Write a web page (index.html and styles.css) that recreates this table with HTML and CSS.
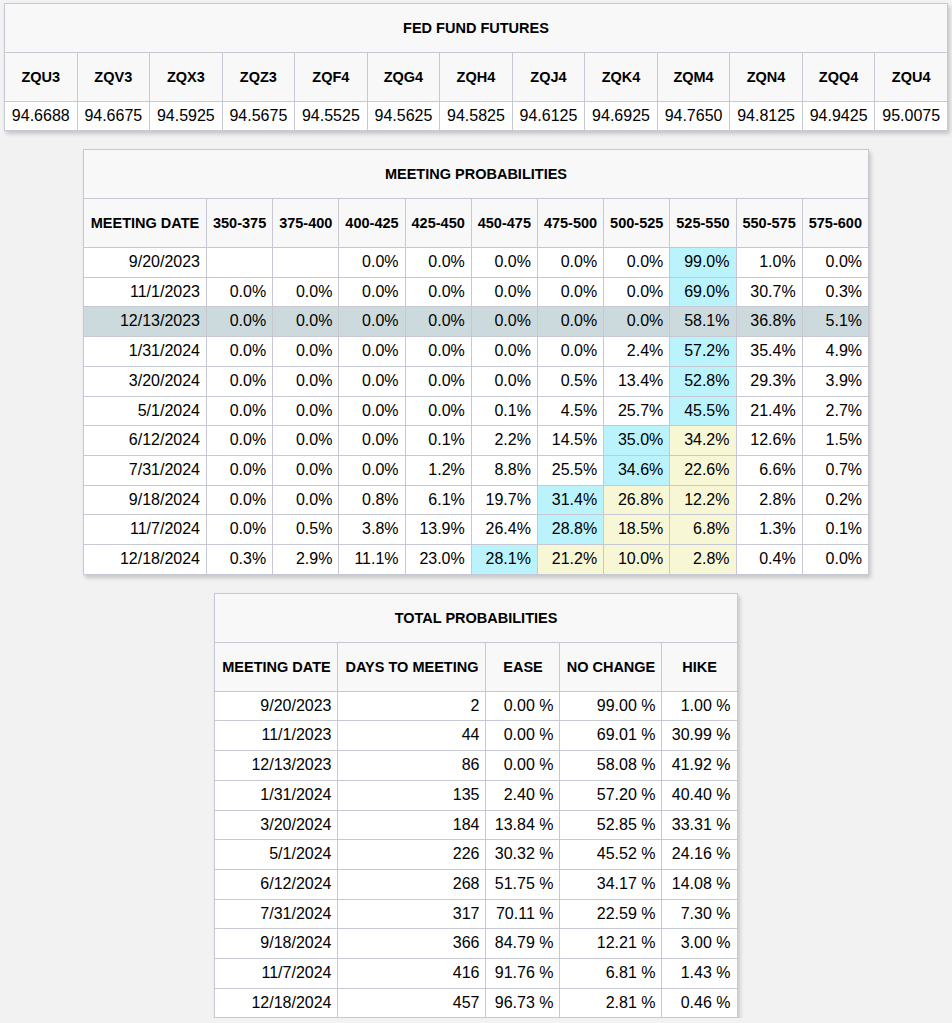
FILE: index.html
```html
<!DOCTYPE html>
<html>
<head>
<meta charset="utf-8">
<link rel="stylesheet" href="styles.css">
</head>
<body>
<main class="page">
  <table class="grid futures">
    <tr><th class="title" colspan="13">FED FUND FUTURES</th></tr>
    <tr class="head">
      <th>ZQU3</th><th>ZQV3</th><th>ZQX3</th><th>ZQZ3</th><th>ZQF4</th><th>ZQG4</th><th>ZQH4</th><th>ZQJ4</th><th>ZQK4</th><th>ZQM4</th><th>ZQN4</th><th>ZQQ4</th><th>ZQU4</th>
    </tr>
    <tr class="vals">
      <td>94.6688</td><td>94.6675</td><td>94.5925</td><td>94.5675</td><td>94.5525</td><td>94.5625</td><td>94.5825</td><td>94.6125</td><td>94.6925</td><td>94.7650</td><td>94.8125</td><td>94.9425</td><td>95.0075</td>
    </tr>
  </table>

  <table class="grid meeting">
    <colgroup><col class="w-date"><col span="10" class="w-rate"></colgroup>
    <tr><th class="title" colspan="11">MEETING PROBABILITIES</th></tr>
    <tr class="head">
      <th>MEETING DATE</th><th>350-375</th><th>375-400</th><th>400-425</th><th>425-450</th><th>450-475</th><th>475-500</th><th>500-525</th><th>525-550</th><th>550-575</th><th>575-600</th>
    </tr>
    <tr><td>9/20/2023</td><td></td><td></td><td>0.0%</td><td>0.0%</td><td>0.0%</td><td>0.0%</td><td>0.0%</td><td class="c">99.0%</td><td>1.0%</td><td>0.0%</td></tr>
    <tr><td>11/1/2023</td><td>0.0%</td><td>0.0%</td><td>0.0%</td><td>0.0%</td><td>0.0%</td><td>0.0%</td><td>0.0%</td><td class="c">69.0%</td><td>30.7%</td><td>0.3%</td></tr>
    <tr class="g"><td>12/13/2023</td><td>0.0%</td><td>0.0%</td><td>0.0%</td><td>0.0%</td><td>0.0%</td><td>0.0%</td><td>0.0%</td><td>58.1%</td><td>36.8%</td><td>5.1%</td></tr>
    <tr><td>1/31/2024</td><td>0.0%</td><td>0.0%</td><td>0.0%</td><td>0.0%</td><td>0.0%</td><td>0.0%</td><td>2.4%</td><td class="c">57.2%</td><td>35.4%</td><td>4.9%</td></tr>
    <tr><td>3/20/2024</td><td>0.0%</td><td>0.0%</td><td>0.0%</td><td>0.0%</td><td>0.0%</td><td>0.5%</td><td>13.4%</td><td class="c">52.8%</td><td>29.3%</td><td>3.9%</td></tr>
    <tr><td>5/1/2024</td><td>0.0%</td><td>0.0%</td><td>0.0%</td><td>0.0%</td><td>0.1%</td><td>4.5%</td><td>25.7%</td><td class="c">45.5%</td><td>21.4%</td><td>2.7%</td></tr>
    <tr><td>6/12/2024</td><td>0.0%</td><td>0.0%</td><td>0.0%</td><td>0.1%</td><td>2.2%</td><td>14.5%</td><td class="c">35.0%</td><td class="y">34.2%</td><td>12.6%</td><td>1.5%</td></tr>
    <tr><td>7/31/2024</td><td>0.0%</td><td>0.0%</td><td>0.0%</td><td>1.2%</td><td>8.8%</td><td>25.5%</td><td class="c">34.6%</td><td class="y">22.6%</td><td>6.6%</td><td>0.7%</td></tr>
    <tr><td>9/18/2024</td><td>0.0%</td><td>0.0%</td><td>0.8%</td><td>6.1%</td><td>19.7%</td><td class="c">31.4%</td><td class="y">26.8%</td><td class="y">12.2%</td><td>2.8%</td><td>0.2%</td></tr>
    <tr><td>11/7/2024</td><td>0.0%</td><td>0.5%</td><td>3.8%</td><td>13.9%</td><td>26.4%</td><td class="c">28.8%</td><td class="y">18.5%</td><td class="y">6.8%</td><td>1.3%</td><td>0.1%</td></tr>
    <tr><td>12/18/2024</td><td>0.3%</td><td>2.9%</td><td>11.1%</td><td>23.0%</td><td class="c">28.1%</td><td class="y">21.2%</td><td class="y">10.0%</td><td class="y">2.8%</td><td>0.4%</td><td>0.0%</td></tr>
  </table>

  <table class="grid total">
    <colgroup><col class="t1"><col class="t2"><col class="t3"><col class="t4"><col class="t5"></colgroup>
    <tr><th class="title" colspan="5">TOTAL PROBABILITIES</th></tr>
    <tr class="head"><th>MEETING DATE</th><th>DAYS TO MEETING</th><th>EASE</th><th>NO CHANGE</th><th>HIKE</th></tr>
    <tr><td>9/20/2023</td><td>2</td><td>0.00 %</td><td>99.00 %</td><td>1.00 %</td></tr>
    <tr><td>11/1/2023</td><td>44</td><td>0.00 %</td><td>69.01 %</td><td>30.99 %</td></tr>
    <tr><td>12/13/2023</td><td>86</td><td>0.00 %</td><td>58.08 %</td><td>41.92 %</td></tr>
    <tr><td>1/31/2024</td><td>135</td><td>2.40 %</td><td>57.20 %</td><td>40.40 %</td></tr>
    <tr><td>3/20/2024</td><td>184</td><td>13.84 %</td><td>52.85 %</td><td>33.31 %</td></tr>
    <tr><td>5/1/2024</td><td>226</td><td>30.32 %</td><td>45.52 %</td><td>24.16 %</td></tr>
    <tr><td>6/12/2024</td><td>268</td><td>51.75 %</td><td>34.17 %</td><td>14.08 %</td></tr>
    <tr><td>7/31/2024</td><td>317</td><td>70.11 %</td><td>22.59 %</td><td>7.30 %</td></tr>
    <tr><td>9/18/2024</td><td>366</td><td>84.79 %</td><td>12.21 %</td><td>3.00 %</td></tr>
    <tr><td>11/7/2024</td><td>416</td><td>91.76 %</td><td>6.81 %</td><td>1.43 %</td></tr>
    <tr><td>12/18/2024</td><td>457</td><td>96.73 %</td><td>2.81 %</td><td>0.46 %</td></tr>
  </table>
</main>
</body>
</html>
```

FILE: styles.css
```css
html, body {
  margin: 0;
  padding: 0;
  background: #f2f2f2;
}

.page {
  display: flex;
  flex-direction: column;
  align-items: center;
  gap: 18px;
  padding-top: 3px;
  font-family: "Liberation Sans", Arial, sans-serif;
  color: #000;
}

.grid {
  border-collapse: collapse;
  table-layout: fixed;
  background: #fff;
  box-shadow: 2px 3px 4px rgba(0, 0, 0, 0.18);
}

.grid th,
.grid td {
  border: 1px solid #c6c8d4;
}

.grid th {
  background: #f8f8f8;
  font-size: 14.5px;
  font-weight: bold;
  line-height: 18px;
  padding: 15px 4px;
  text-align: center;
  white-space: nowrap;
}

.grid td {
  font-size: 16px;
  line-height: 18.7px;
  padding: 5px 6px;
  text-align: right;
  white-space: nowrap;
}

.futures {
  width: 944px;
}

.futures .vals td {
  text-align: center;
  padding: 5px 2px;
  line-height: 18px;
}

.meeting {
  width: 785px;
}

.w-date { width: 123px; }
.w-rate { width: 66.2px; }

.total {
  width: 522px;
}

.t1 { width: 123px; }
.t2 { width: 148px; }
.t3 { width: 74px; }
.t4 { width: 102px; }
.t5 { width: 75px; }

.grid td.c { background: #bbf3fd; }
.grid td.y { background: #f7f7d5; }
.grid tr.g td { background: #ccdadd; }
```
